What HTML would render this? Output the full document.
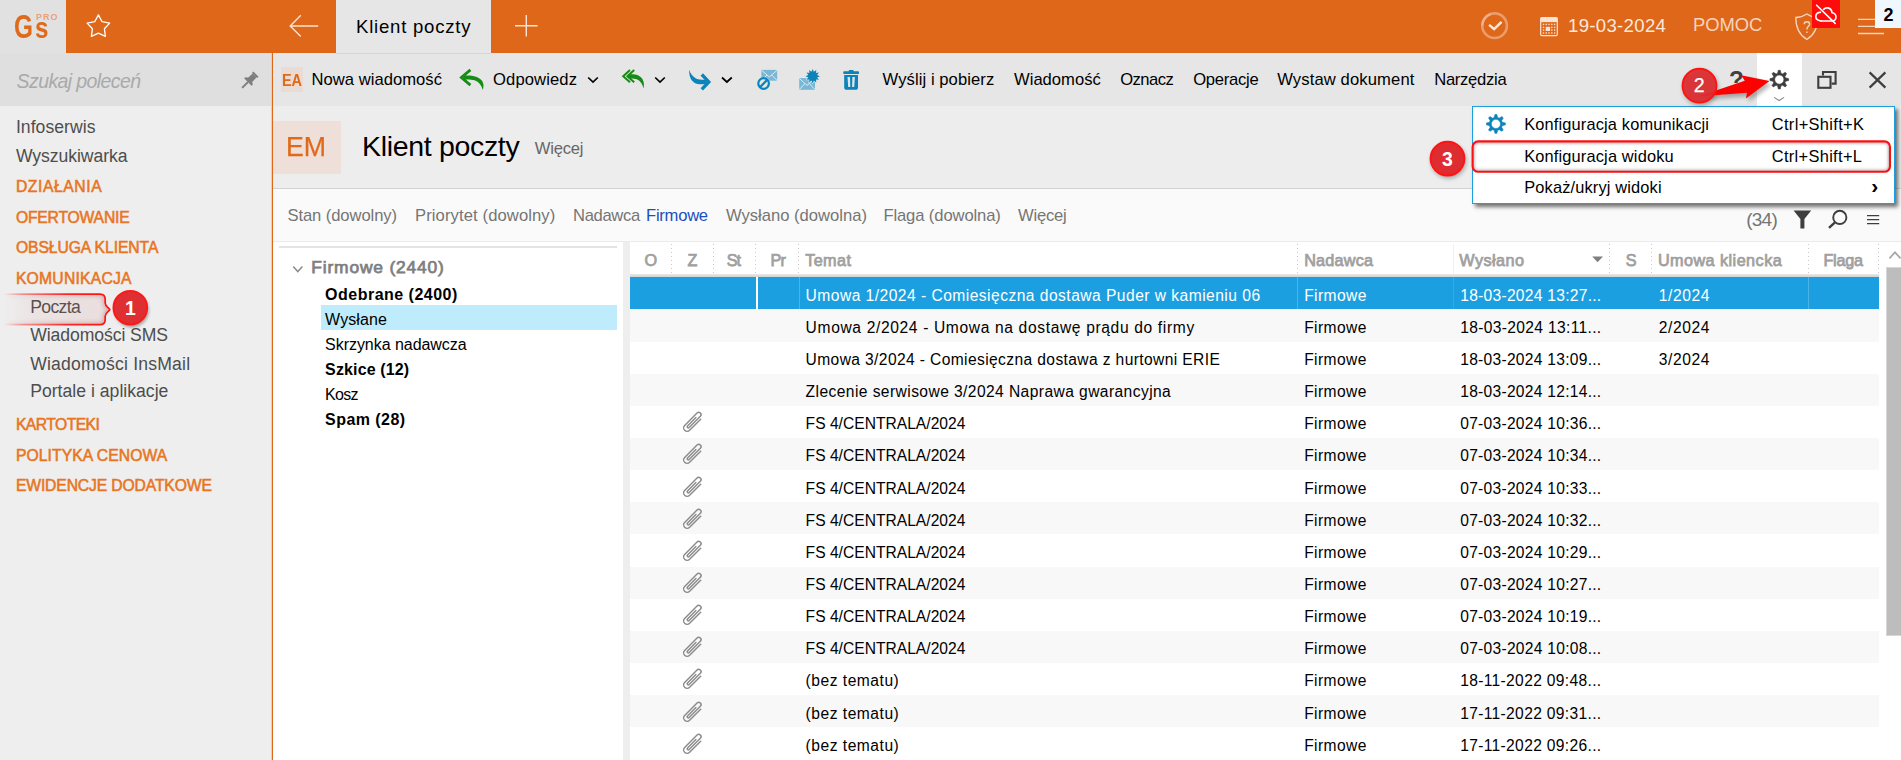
<!DOCTYPE html>
<html lang="pl">
<head>
<meta charset="utf-8">
<title>Klient poczty</title>
<style>
html,body{margin:0;padding:0;}
body{width:1901px;height:760px;overflow:hidden;position:relative;background:#fff;font-family:"Liberation Sans",sans-serif;}
.b{position:absolute;display:block;}
.t{position:absolute;white-space:nowrap;line-height:normal;display:block;}
svg{overflow:visible;}
</style>
</head>
<body>
<!-- ===== backgrounds ===== -->
<div class="b" style="left:0;top:0;width:1901px;height:53px;background:#DE6719"></div>
<div class="b" style="left:0;top:0;width:66px;height:53px;background:#E1E1E1"></div>
<div class="b" style="left:336px;top:0;width:155px;height:53px;background:#E6E6E6"></div>
<!-- sidebar -->
<div class="b" style="left:0;top:53px;width:272px;height:53px;background:#DFDFDF"></div>
<div class="b" style="left:0;top:106px;width:272px;height:654px;background:#EEEEEE"></div>
<div class="b" style="left:272px;top:53px;width:1px;height:707px;background:#DE6719"></div>
<div class="b" style="left:271px;top:53px;width:1px;height:707px;background:#EACDB9"></div>
<!-- main -->
<div class="b" style="left:273px;top:53px;width:1628px;height:53px;background:#E6E6E6"></div>
<div class="b" style="left:336px;top:53px;width:155px;height:1px;background:#DDD3CC"></div>
<div class="b" style="left:1757px;top:53px;width:45px;height:53px;background:#fff"></div>
<div class="b" style="left:273px;top:106px;width:1628px;height:82px;background:#EDEDED"></div>
<div class="b" style="left:273px;top:188px;width:1628px;height:1px;background:#D2D2D2"></div>
<div class="b" style="left:273px;top:189px;width:1628px;height:52px;background:#FAFAFA"></div>
<div class="b" style="left:273px;top:241px;width:1628px;height:1px;background:#EBEBEB"></div>
<div class="b" style="left:273px;top:120.5px;width:68px;height:53px;background:#EEE0D8"></div>
<!-- tree panel -->
<div class="b" style="left:279px;top:246px;width:338px;height:2px;background:#E4E4E4"></div>
<div class="b" style="left:321px;top:305px;width:296px;height:24.5px;background:#BEECFD"></div>
<div class="b" style="left:623px;top:242px;width:7px;height:518px;background:#EEEEEE"></div>
<!-- list -->
<div class="b" style="left:630px;top:274.4px;width:1249px;height:3px;background:linear-gradient(#E9E9E9,#D2D2D2)"></div>
<div class="b" style="left:630px;top:277px;width:1249px;height:32px;background:#1C9FE1"></div>
<div class="b" style="left:630px;top:309px;width:1249px;height:33px;background:#F8F8F8"></div>
<div class="b" style="left:630px;top:374px;width:1249px;height:32px;background:#F8F8F8"></div>
<div class="b" style="left:630px;top:438px;width:1249px;height:32px;background:#F8F8F8"></div>
<div class="b" style="left:630px;top:502px;width:1249px;height:32px;background:#F8F8F8"></div>
<div class="b" style="left:630px;top:567px;width:1249px;height:32px;background:#F8F8F8"></div>
<div class="b" style="left:630px;top:631px;width:1249px;height:32px;background:#F8F8F8"></div>
<div class="b" style="left:630px;top:695px;width:1249px;height:32px;background:#F8F8F8"></div>
<div class="b" style="left:756px;top:277px;width:1.6px;height:32px;background:#fff"></div>
<div class="b" style="left:799px;top:277px;width:1px;height:32px;background:#4CB3E8"></div>
<div class="b" style="left:1297px;top:277px;width:1px;height:32px;background:#4CB3E8"></div>
<div class="b" style="left:1453px;top:277px;width:1px;height:32px;background:#35A9E5"></div>
<div class="b" style="left:1808px;top:277px;width:1px;height:32px;background:#4CB3E8"></div>
<!-- column dividers (dotted) -->
<svg class="b" style="left:0;top:0" width="1901" height="760">
<g stroke="#C9C9C9" stroke-width="1" stroke-dasharray="1 3" fill="none">
<path d="M671.5 244V275M713.5 244V275M755.5 244V275M798.5 244V275M1297.5 244V275M1609.5 244V275M1651.5 244V275M1808.5 244V275M1878.5 244V275"/>
</g>
<path d="M1453.5 244V275" stroke="#F0F0F0" stroke-width="1"/>
<path d="M1592.2 256.5H1603L1597.6 262.2Z" fill="#7F7F7F"/>
<!-- scroll -->
<path d="M1889.5 258.3L1895 252.3L1900.5 258.3" stroke="#A8A8A8" stroke-width="1.8" fill="none"/>
</svg>
<div class="b" style="left:1886px;top:267px;width:16px;height:369px;background:#BDBDBD;border:1px solid #D6D6D6;box-sizing:border-box"></div>
<svg class="b" style="left:680.9px;top:410.3px" width="24" height="24" viewBox="-12 -12 24 24"><g transform="rotate(45)" fill="none" stroke="#8B8B8B" stroke-width="1.45" stroke-linecap="round"><path d="M3.5 -7.4V8.3A3.5 3.5 0 0 1 -3.5 8.3V-9.2A2.35 2.35 0 0 1 1.2 -9.2V6.6A1.15 1.15 0 0 1 -1.1 6.6V-5.2"/></g></svg>
<svg class="b" style="left:680.9px;top:442.4px" width="24" height="24" viewBox="-12 -12 24 24"><g transform="rotate(45)" fill="none" stroke="#8B8B8B" stroke-width="1.45" stroke-linecap="round"><path d="M3.5 -7.4V8.3A3.5 3.5 0 0 1 -3.5 8.3V-9.2A2.35 2.35 0 0 1 1.2 -9.2V6.6A1.15 1.15 0 0 1 -1.1 6.6V-5.2"/></g></svg>
<svg class="b" style="left:680.9px;top:474.6px" width="24" height="24" viewBox="-12 -12 24 24"><g transform="rotate(45)" fill="none" stroke="#8B8B8B" stroke-width="1.45" stroke-linecap="round"><path d="M3.5 -7.4V8.3A3.5 3.5 0 0 1 -3.5 8.3V-9.2A2.35 2.35 0 0 1 1.2 -9.2V6.6A1.15 1.15 0 0 1 -1.1 6.6V-5.2"/></g></svg>
<svg class="b" style="left:680.9px;top:506.7px" width="24" height="24" viewBox="-12 -12 24 24"><g transform="rotate(45)" fill="none" stroke="#8B8B8B" stroke-width="1.45" stroke-linecap="round"><path d="M3.5 -7.4V8.3A3.5 3.5 0 0 1 -3.5 8.3V-9.2A2.35 2.35 0 0 1 1.2 -9.2V6.6A1.15 1.15 0 0 1 -1.1 6.6V-5.2"/></g></svg>
<svg class="b" style="left:680.9px;top:538.9px" width="24" height="24" viewBox="-12 -12 24 24"><g transform="rotate(45)" fill="none" stroke="#8B8B8B" stroke-width="1.45" stroke-linecap="round"><path d="M3.5 -7.4V8.3A3.5 3.5 0 0 1 -3.5 8.3V-9.2A2.35 2.35 0 0 1 1.2 -9.2V6.6A1.15 1.15 0 0 1 -1.1 6.6V-5.2"/></g></svg>
<svg class="b" style="left:680.9px;top:571.0px" width="24" height="24" viewBox="-12 -12 24 24"><g transform="rotate(45)" fill="none" stroke="#8B8B8B" stroke-width="1.45" stroke-linecap="round"><path d="M3.5 -7.4V8.3A3.5 3.5 0 0 1 -3.5 8.3V-9.2A2.35 2.35 0 0 1 1.2 -9.2V6.6A1.15 1.15 0 0 1 -1.1 6.6V-5.2"/></g></svg>
<svg class="b" style="left:680.9px;top:603.1px" width="24" height="24" viewBox="-12 -12 24 24"><g transform="rotate(45)" fill="none" stroke="#8B8B8B" stroke-width="1.45" stroke-linecap="round"><path d="M3.5 -7.4V8.3A3.5 3.5 0 0 1 -3.5 8.3V-9.2A2.35 2.35 0 0 1 1.2 -9.2V6.6A1.15 1.15 0 0 1 -1.1 6.6V-5.2"/></g></svg>
<svg class="b" style="left:680.9px;top:635.3px" width="24" height="24" viewBox="-12 -12 24 24"><g transform="rotate(45)" fill="none" stroke="#8B8B8B" stroke-width="1.45" stroke-linecap="round"><path d="M3.5 -7.4V8.3A3.5 3.5 0 0 1 -3.5 8.3V-9.2A2.35 2.35 0 0 1 1.2 -9.2V6.6A1.15 1.15 0 0 1 -1.1 6.6V-5.2"/></g></svg>
<svg class="b" style="left:680.9px;top:667.4px" width="24" height="24" viewBox="-12 -12 24 24"><g transform="rotate(45)" fill="none" stroke="#8B8B8B" stroke-width="1.45" stroke-linecap="round"><path d="M3.5 -7.4V8.3A3.5 3.5 0 0 1 -3.5 8.3V-9.2A2.35 2.35 0 0 1 1.2 -9.2V6.6A1.15 1.15 0 0 1 -1.1 6.6V-5.2"/></g></svg>
<svg class="b" style="left:680.9px;top:699.6px" width="24" height="24" viewBox="-12 -12 24 24"><g transform="rotate(45)" fill="none" stroke="#8B8B8B" stroke-width="1.45" stroke-linecap="round"><path d="M3.5 -7.4V8.3A3.5 3.5 0 0 1 -3.5 8.3V-9.2A2.35 2.35 0 0 1 1.2 -9.2V6.6A1.15 1.15 0 0 1 -1.1 6.6V-5.2"/></g></svg>
<svg class="b" style="left:680.9px;top:731.7px" width="24" height="24" viewBox="-12 -12 24 24"><g transform="rotate(45)" fill="none" stroke="#8B8B8B" stroke-width="1.45" stroke-linecap="round"><path d="M3.5 -7.4V8.3A3.5 3.5 0 0 1 -3.5 8.3V-9.2A2.35 2.35 0 0 1 1.2 -9.2V6.6A1.15 1.15 0 0 1 -1.1 6.6V-5.2"/></g></svg>

<!-- ===== top bar icons ===== -->
<svg class="b" style="left:0;top:0" width="1901" height="53" fill="none">
<!-- star -->
<path d="M98.4 14.9L102.1 21.7L109.7 23.1L104.4 28.7L105.4 36.4L98.4 33.1L91.4 36.4L92.4 28.7L87.1 23.1L94.7 21.7Z" stroke="#fff" stroke-width="1.3" stroke-linejoin="round"/>
<!-- back arrow -->
<path d="M290.2 26H318.2M300.8 15.3L290.2 26L300.8 36.6" stroke="#FBE3D3" stroke-width="1.4"/>
<!-- plus -->
<path d="M515 25.8H537.6M526.3 15V36.6" stroke="#FBE3D3" stroke-width="1.4"/>
<!-- check circle -->
<circle cx="1494.6" cy="25.7" r="12.3" stroke="#fff" stroke-opacity="0.36" stroke-width="2.6"/>
<path d="M1490.5 14.2A12.3 12.3 0 0 0 1482.3 25.7" stroke="#fff" stroke-opacity="0.22" stroke-width="2.6"/>
<path d="M1489.1 24.8L1494.1 29.2L1501.6 21.8" stroke="#FCE8DC" stroke-width="2.4"/>
<!-- calendar -->
<rect x="1540.7" y="17.6" width="16.6" height="18" rx="1.2" stroke="#FAE3D5" stroke-width="1.2"/>
<rect x="1540.7" y="17.6" width="16.6" height="4.5" fill="#FAE3D5"/>
<g fill="#FAE3D5"><rect x="1545.7" y="26.8" width="4.4" height="4.2"/><rect x="1542.8" y="23.7" width="1.4" height="1.4"/><rect x="1545.6" y="23.7" width="1.4" height="1.4"/><rect x="1548.3" y="23.7" width="1.4" height="1.4"/><rect x="1551.1" y="23.7" width="1.4" height="1.4"/><rect x="1553.9" y="23.7" width="1.4" height="1.4"/><rect x="1542.8" y="26.7" width="1.4" height="1.4"/><rect x="1551.1" y="26.7" width="1.4" height="1.4"/><rect x="1553.9" y="26.7" width="1.4" height="1.4"/><rect x="1542.8" y="29.4" width="1.4" height="1.4"/><rect x="1551.1" y="29.4" width="1.4" height="1.4"/><rect x="1553.9" y="29.4" width="1.4" height="1.4"/><rect x="1542.8" y="32.3" width="1.4" height="1.4"/><rect x="1545.6" y="32.3" width="1.4" height="1.4"/><rect x="1548.3" y="32.3" width="1.4" height="1.4"/><rect x="1551.1" y="32.3" width="1.4" height="1.4"/><rect x="1553.9" y="32.3" width="1.4" height="1.4"/></g>
<!-- shield -->
<path d="M1795.8 17.5C1800 17.5 1803.5 16.2 1806.8 14C1810.1 16.2 1813.6 17.5 1817.8 17.5C1817.8 27 1815 34.5 1806.8 39.4C1798.6 34.5 1795.8 27 1795.8 17.5Z" stroke="#F6D3BD" stroke-width="1.3"/>
<path d="M1804.2 24.2C1804.2 21 1809.6 21 1809.6 24.2C1809.6 26.4 1806.9 26.4 1806.9 29.4M1806.9 31.6V33" stroke="#F6D3BD" stroke-width="1.4"/>
<!-- hamburger -->
<path d="M1858 19.3H1884M1858 26.3H1884M1858 33.5H1884" stroke="#F6D3BD" stroke-width="1.3"/>
</svg>
<div class="b" style="left:1812px;top:0;width:28px;height:28px;background:#FF0B0B"></div>
<svg class="b" style="left:1812px;top:0" width="28" height="28" fill="none" stroke="#fff" stroke-width="1.6" stroke-linecap="round" stroke-linejoin="round">
<path d="M11.6 9.4C12.6 8.3 14 7.7 15.6 7.9C18.2 8.2 19.8 10.2 20 12.8C22.6 13 24.2 14.9 24 17.2C23.8 19.5 22.2 20.9 20 21H9.2"/>
<path d="M9.2 21C6 21 3.6 19.2 3.8 16.2C4 13.6 6 12.2 8.4 12.4"/>
<path d="M4.6 5.2L23.2 23.4"/>
</svg>
<div class="b" style="left:1875px;top:0;width:26px;height:28px;background:#F0F8FF"></div>

<!-- search pin -->
<svg class="b" style="left:237.2px;top:68.7px" width="24" height="24" viewBox="-12 -12 24 24">
<g transform="rotate(45)" fill="#7E7E7E"><rect x="-3.7" y="-9.8" width="7.4" height="1.9" rx="0.5"/><path d="M-2.7 -8H2.7L3.1 -1.2H-3.1Z"/><path d="M-5.4 1.5C-5.4 -0.9 -3.2 -1.9 0 -1.9S5.4 -0.9 5.4 1.5Z"/><rect x="-0.95" y="1.4" width="1.9" height="8.3"/></g>
</svg>

<!-- ===== toolbar icons ===== -->
<div class="b" style="left:281px;top:67px;width:21.5px;height:25px;background:#EADCD5"></div>
<svg class="b" style="left:0;top:53px" width="1901" height="53" viewBox="0 53 1901 53" fill="none">
<!-- reply (green) -->
<path d="M470.4 69.9L461.4 77.5L470.4 85.1" stroke="#168C16" stroke-width="2.8"/>
<path d="M463.6 75.6C472 75 478.6 76.4 482 80.8C484 83.8 483.8 87 482.8 90C481.6 85.4 479 82 474.6 80.3C471.4 79.3 468 79.3 463.6 79.5Z" fill="#168C16"/>
<!-- chevrons -->
<g stroke="#000" stroke-width="1.7">
<path d="M588.2 77.5L593 82L597.8 77.5"/>
<path d="M655.2 77.5L660 82L664.8 77.5"/>
<path d="M722 77.5L726.9 82L731.8 77.5"/>
</g>
<!-- reply all -->
<path d="M630 70.1L623.2 76.2L630 82.3M634.2 70.1L627.4 76.2L634.2 82.3" stroke="#168C16" stroke-width="2"/>
<path d="M628.4 74.4C634 73.8 639.4 74.4 642.4 79C644.2 82 644.2 85.4 643.5 88.4C642.6 84.4 640.6 81 636.8 79.3C634.4 78.4 631.4 78.4 628.4 78.5Z" fill="#168C16"/>
<!-- forward (blue) -->
<path d="M701.8 74.5L708.8 81.9L701.8 89.3" stroke="#0B84BA" stroke-width="3.3"/>
<path d="M689.2 69.8C690.4 73.6 692.6 76.6 696 78.4C699 79.8 702.6 79.8 707 79.7L706 84C702 84.4 697.4 84.6 694 82.4C690.4 80 689 75.4 689.2 69.8Z" fill="#0B84BA"/>
<!-- mail blocked -->
<rect x="761.4" y="69.9" width="15.8" height="10.8" fill="#78B8D6"/>
<path d="M761.6 70.3L769.3 77L777 70.3M761.6 80.4L767 75M777 80.4L771.6 75" stroke="#E4F0F6" stroke-width="0.9"/>
<circle cx="763.6" cy="83.5" r="6.6" fill="#E6E6E6"/>
<circle cx="763.6" cy="83.5" r="5.3" stroke="#0B84BA" stroke-width="2.2"/>
<path d="M759.9 87.2L767.3 79.8" stroke="#0B84BA" stroke-width="2.2"/>
<!-- mail new -->
<rect x="799.2" y="78.1" width="15.8" height="11.7" fill="#78B8D6"/>
<path d="M799.4 78.5L807.1 85.4L814.8 78.5M799.4 89.5L804.8 83.6M814.8 89.5L809.4 83.6" stroke="#E4F0F6" stroke-width="0.9"/>
<path d="M812.7 68.0L814.1 70.8L816.8 69.1L816.7 72.2L819.8 72.1L818.1 74.8L820.9 76.2L818.1 77.6L819.8 80.3L816.7 80.2L816.8 83.3L814.1 81.6L812.7 84.4L811.3 81.6L808.6 83.3L808.7 80.2L805.6 80.3L807.3 77.6L804.5 76.2L807.3 74.8L805.6 72.1L808.7 72.2L808.6 69.1L811.3 70.8Z" fill="#E6E6E6"/>
<path d="M812.7 69.0L813.9 71.8L816.3 70.0L816.0 72.9L818.9 72.6L817.1 75.0L819.9 76.2L817.1 77.4L818.9 79.8L816.0 79.5L816.3 82.4L813.9 80.6L812.7 83.4L811.5 80.6L809.1 82.4L809.4 79.5L806.5 79.8L808.3 77.4L805.5 76.2L808.3 75.0L806.5 72.6L809.4 72.9L809.1 70.0L811.5 71.8Z" fill="#0B84BA"/>
<!-- trash -->
<path d="M848.6 71.3C848.6 70.4 849.2 69.9 850 69.9H852.4C853.2 69.9 853.8 70.4 853.8 71.3H858.2C858.7 71.3 859 71.6 859 72.1V74.1H843.3V72.1C843.3 71.6 843.6 71.3 844.1 71.3Z" fill="#0B84BA"/>
<path d="M844.2 75H858V87.4C858 88.9 857.1 89.8 855.6 89.8H846.6C845.1 89.8 844.2 88.9 844.2 87.4Z" fill="#0B84BA"/>
<path d="M847.5 76.9H850L850.3 86.9H848.2ZM852.4 76.9H854.9L854.2 86.9H852.1Z" fill="#DDE6EA"/>
<!-- gear -->
<path d="M1777.57 73.34L1778.36 70.25L1780.24 70.25L1781.03 73.34L1782.50 73.94L1785.25 72.32L1786.58 73.65L1784.96 76.40L1785.56 77.87L1788.65 78.66L1788.65 80.54L1785.56 81.33L1784.96 82.80L1786.58 85.55L1785.25 86.88L1782.50 85.26L1781.03 85.86L1780.24 88.95L1778.36 88.95L1777.57 85.86L1776.10 85.26L1773.35 86.88L1772.02 85.55L1773.64 82.80L1773.04 81.33L1769.95 80.54L1769.95 78.66L1773.04 77.87L1773.64 76.40L1772.02 73.65L1773.35 72.32L1776.10 73.94Z M1774.70 79.60a4.60 4.60 0 1 0 9.20 0a4.60 4.60 0 1 0 -9.20 0Z" fill="#3E3E3E" fill-rule="evenodd" stroke="#3E3E3E" stroke-width="0.6" stroke-linejoin="round"/>
<path d="M1774.1 97.4L1779.1 100.5L1784.1 97.4" stroke="#8A8A8A" stroke-width="1.1"/>
<!-- restore -->
<path d="M1823 75.6V72H1835.6V83.6H1831.6" stroke="#3E3E3E" stroke-width="2.1"/>
<rect x="1818.3" y="76.8" width="12.2" height="11" stroke="#3E3E3E" stroke-width="2.1"/>
<!-- close -->
<path d="M1869.6 72.4L1885.4 87.6M1885.4 72.4L1869.6 87.6" stroke="#3E3E3E" stroke-width="2.2"/>
</svg>

<!-- filter bar icons -->
<svg class="b" style="left:0;top:189px" width="1901" height="52" viewBox="0 189 1901 52" fill="none">
<path d="M1793.6 210.4H1811.2L1804.4 219V228.4H1800.4V219Z" fill="#3E3E3E"/>
<circle cx="1839.8" cy="217.4" r="6.6" stroke="#3E3E3E" stroke-width="1.9"/>
<path d="M1835 222.4L1829 227.8" stroke="#3E3E3E" stroke-width="2.4"/>
<path d="M1867 215.6H1879.2M1867 219.6H1879.2M1867 223.6H1879.2" stroke="#3E3E3E" stroke-width="1.3"/>
<!-- tree chevron -->
</svg>
<svg class="b" style="left:290px;top:262px" width="16" height="14" fill="none"><path d="M3.2 4.6L7.8 9.6L12.4 4.6" stroke="#8C8C8C" stroke-width="1.5"/></svg>

<!-- ===== popup menu ===== -->
<div class="b" style="left:1472px;top:106px;width:423px;height:97.5px;background:#fff;border:1px solid #1C9FE1;box-sizing:border-box;box-shadow:3px 3px 4px rgba(0,0,0,0.55)"></div>
<svg class="b" style="left:0;top:106px" width="1901" height="40" viewBox="0 106 1901 40" fill="none"><path d="M1494.14 117.54L1494.95 114.45L1496.85 114.45L1497.66 117.54L1499.15 118.16L1501.91 116.55L1503.25 117.89L1501.64 120.65L1502.26 122.14L1505.35 122.95L1505.35 124.85L1502.26 125.66L1501.64 127.15L1503.25 129.91L1501.91 131.25L1499.15 129.64L1497.66 130.26L1496.85 133.35L1494.95 133.35L1494.14 130.26L1492.65 129.64L1489.89 131.25L1488.55 129.91L1490.16 127.15L1489.54 125.66L1486.45 124.85L1486.45 122.95L1489.54 122.14L1490.16 120.65L1488.55 117.89L1489.89 116.55L1492.65 118.16Z M1491.30 123.90a4.60 4.60 0 1 0 9.20 0a4.60 4.60 0 1 0 -9.20 0Z" fill="#0B84BA" fill-rule="evenodd" stroke="#0B84BA" stroke-width="0.6" stroke-linejoin="round"/></svg>

<!-- ===== annotations ===== -->
<!-- poczta callout -->
<svg class="b" style="left:0;top:284px;z-index:5" width="160" height="52" viewBox="0 284 160 52" fill="none">
<defs>
<linearGradient id="gs" gradientUnits="userSpaceOnUse" x1="4" x2="110" y1="0" y2="0"><stop offset="0" stop-color="#FF3030" stop-opacity="0"/><stop offset="0.18" stop-color="#FF3A3A" stop-opacity="0.5"/><stop offset="0.6" stop-color="#FF1C1C" stop-opacity="0.95"/><stop offset="1" stop-color="#FF1010"/></linearGradient>
<linearGradient id="gf" gradientUnits="userSpaceOnUse" x1="4" x2="110" y1="0" y2="0"><stop offset="0" stop-color="#D07070" stop-opacity="0"/><stop offset="0.3" stop-color="#D07070" stop-opacity="0.09"/><stop offset="1" stop-color="#D07070" stop-opacity="0.13"/></linearGradient>
<linearGradient id="gi" gradientUnits="userSpaceOnUse" x1="4" x2="110" y1="0" y2="0"><stop offset="0" stop-color="#A04848" stop-opacity="0"/><stop offset="0.4" stop-color="#A04848" stop-opacity="0.28"/><stop offset="1" stop-color="#A04848" stop-opacity="0.45"/></linearGradient>
<filter id="sh1" x="-40%" y="-40%" width="180%" height="180%"><feGaussianBlur stdDeviation="1.8"/></filter>
<filter id="bl1" x="-10%" y="-40%" width="120%" height="180%"><feGaussianBlur stdDeviation="2.2"/></filter>
<clipPath id="cp1"><path d="M4 294.1H100Q105.2 294.1 105.2 299.3V303C105.2 307 109.8 308 109.8 309.6C109.8 311.2 105.2 312.2 105.2 316.2V319.4Q105.2 324.6 100 324.6H4Z"/></clipPath>
</defs>
<path d="M4 294.1H100Q105.2 294.1 105.2 299.3V303C105.2 307 109.8 308 109.8 309.6C109.8 311.2 105.2 312.2 105.2 316.2V319.4Q105.2 324.6 100 324.6H4Z" fill="url(#gf)"/>
<g clip-path="url(#cp1)"><path d="M4 294.1H100Q105.2 294.1 105.2 299.3V303C105.2 307 109.8 308 109.8 309.6C109.8 311.2 105.2 312.2 105.2 316.2V319.4Q105.2 324.6 100 324.6H4" stroke="url(#gi)" stroke-width="3.5" filter="url(#bl1)"/></g>
<path d="M4 294.1H100Q105.2 294.1 105.2 299.3V303C105.2 307 109.8 308 109.8 309.6C109.8 311.2 105.2 312.2 105.2 316.2V319.4Q105.2 324.6 100 324.6H4" stroke="url(#gs)" stroke-width="1.7"/>
<circle cx="131.6" cy="310.2" r="17.2" fill="#000" opacity="0.32" filter="url(#sh1)"/>
<circle cx="130.3" cy="307.7" r="16.8" fill="#DE3032" stroke="#FF1818" stroke-width="2"/>
</svg>
<!-- circle 2 + arrow -->
<svg class="b" style="left:1670px;top:56px;z-index:5" width="130" height="60" viewBox="1670 56 130 60" fill="none">
<defs><filter id="sh2" x="-40%" y="-40%" width="180%" height="180%"><feGaussianBlur stdDeviation="2.2"/></filter></defs>
<circle cx="1700.6" cy="88.0" r="17.6" fill="#000" opacity="0.30" filter="url(#sh2)"/>
<path d="M1698 96.4L1744.8 80.7L1741.1 75.3L1769.5 81.1L1745.9 98.6L1747 92.8Z" fill="#000" opacity="0.30" filter="url(#sh2)" transform="translate(2.4 3.4)"/>
<path d="M1698 96.4L1744.8 80.7L1741.1 75.3L1769.5 81.1L1745.9 98.6L1747 92.8Z" fill="#FF0000"/>
<circle cx="1699.5" cy="85.7" r="16.9" fill="#DE2C30" fill-opacity="0.93" stroke="#FF1414" stroke-width="2"/>
</svg>
<!-- circle 3 + rect -->
<svg class="b" style="left:1420px;top:130px;z-index:5" width="481" height="60" viewBox="1420 130 481 60" fill="none">
<defs><filter id="sh3" x="-40%" y="-40%" width="180%" height="180%"><feGaussianBlur stdDeviation="2.2"/></filter>
<filter id="sh4" x="-5%" y="-40%" width="110%" height="180%"><feGaussianBlur stdDeviation="1.5"/></filter>
<clipPath id="cp3"><rect x="1472.6" y="141.4" width="417.4" height="30.4" rx="5.5"/></clipPath></defs>
<circle cx="1448.6" cy="160.9" r="17.6" fill="#000" opacity="0.30" filter="url(#sh3)"/>
<circle cx="1447.5" cy="158.6" r="16.9" fill="#DE2C30" stroke="#FF1414" stroke-width="2"/>
<g clip-path="url(#cp3)"><rect x="1472.6" y="141.4" width="417.4" height="30.4" rx="5.5" stroke="#000" stroke-width="4" opacity="0.30" filter="url(#sh4)"/></g>
<rect x="1472.6" y="141.4" width="417.4" height="30.4" rx="5.5" stroke="#FF1010" stroke-width="2.1"/>
</svg>

<!-- ===== texts ===== -->
<span class="t" id="t0" style="left:356.00px;top:15.97px;font-size:18.60px;color:#000;letter-spacing:0.757px;">Klient poczty</span>
<span class="t" id="t1" style="left:1568.00px;top:14.87px;font-size:18.60px;color:#FCE9DC;letter-spacing:0.308px;">19-03-2024</span>
<span class="t" id="t2" style="left:1693.00px;top:14.15px;font-size:18.40px;color:#F6D3BD;letter-spacing:-0.046px;">POMOC</span>
<span class="t" id="t3" style="left:1883.50px;top:4.61px;font-size:18.00px;color:#000;font-weight:700;letter-spacing:0.000px;">2</span>
<span class="t" id="t4" style="left:14.40px;top:7.67px;font-size:33.40px;color:#E0691A;font-weight:700;letter-spacing:0.000px;transform:scaleX(0.730);transform-origin:0 0;">G</span>
<span class="t" id="t5" style="left:34.90px;top:10.57px;font-size:30.20px;color:#E0691A;font-weight:700;letter-spacing:0.000px;transform:scaleX(0.800);transform-origin:0 0;">s</span>
<span class="t" id="t6" style="left:36.10px;top:11.55px;font-size:9.00px;color:#EBA17A;font-weight:700;letter-spacing:0.942px;">PRO</span>
<span class="t" id="t7" style="left:16.60px;top:69.85px;font-size:19.50px;color:#A9A9A9;font-style:italic;letter-spacing:-0.597px;">Szukaj poleceń</span>
<span class="t" id="t8" style="left:15.90px;top:116.77px;font-size:17.60px;color:#4D4D4D;letter-spacing:0.044px;">Infoserwis</span>
<span class="t" id="t9" style="left:15.90px;top:145.97px;font-size:17.60px;color:#4D4D4D;letter-spacing:-0.051px;">Wyszukiwarka</span>
<span class="t" id="t10" style="left:15.90px;top:177.89px;font-size:15.70px;color:#E8751F;letter-spacing:0.590px;-webkit-text-stroke:0.55px #E8751F;">DZIAŁANIA</span>
<span class="t" id="t11" style="left:15.90px;top:208.89px;font-size:15.70px;color:#E8751F;letter-spacing:-0.184px;-webkit-text-stroke:0.55px #E8751F;">OFERTOWANIE</span>
<span class="t" id="t12" style="left:15.90px;top:239.09px;font-size:15.70px;color:#E8751F;letter-spacing:-0.076px;-webkit-text-stroke:0.55px #E8751F;">OBSŁUGA KLIENTA</span>
<span class="t" id="t13" style="left:15.90px;top:270.09px;font-size:15.70px;color:#E8751F;letter-spacing:0.237px;-webkit-text-stroke:0.55px #E8751F;">KOMUNIKACJA</span>
<span class="t" id="t14" style="left:30.20px;top:297.37px;font-size:17.60px;color:#4D4D4D;letter-spacing:-0.639px;">Poczta</span>
<span class="t" id="t15" style="left:30.20px;top:325.37px;font-size:17.60px;color:#4D4D4D;letter-spacing:-0.079px;">Wiadomości SMS</span>
<span class="t" id="t16" style="left:30.20px;top:353.77px;font-size:17.60px;color:#4D4D4D;letter-spacing:0.204px;">Wiadomości InsMail</span>
<span class="t" id="t17" style="left:30.20px;top:381.47px;font-size:17.60px;color:#4D4D4D;letter-spacing:0.017px;">Portale i aplikacje</span>
<span class="t" id="t18" style="left:15.90px;top:415.69px;font-size:15.70px;color:#E8751F;letter-spacing:-0.543px;-webkit-text-stroke:0.55px #E8751F;">KARTOTEKI</span>
<span class="t" id="t19" style="left:15.90px;top:446.69px;font-size:15.70px;color:#E8751F;letter-spacing:0.083px;-webkit-text-stroke:0.55px #E8751F;">POLITYKA CENOWA</span>
<span class="t" id="t20" style="left:15.90px;top:477.39px;font-size:15.70px;color:#E8751F;letter-spacing:-0.135px;-webkit-text-stroke:0.55px #E8751F;">EWIDENCJE DODATKOWE</span>
<span class="t" id="t21" style="left:281.60px;top:72.38px;font-size:15.60px;color:#E0691A;font-weight:700;letter-spacing:-0.300px;transform:scaleX(0.930);transform-origin:0 0;">EA</span>
<span class="t" id="t22" style="left:311.40px;top:69.58px;font-size:16.60px;color:#000;letter-spacing:0.043px;">Nowa wiadomość</span>
<span class="t" id="t23" style="left:493.00px;top:69.58px;font-size:16.60px;color:#000;letter-spacing:0.121px;">Odpowiedz</span>
<span class="t" id="t24" style="left:882.60px;top:69.58px;font-size:16.60px;color:#000;letter-spacing:0.072px;">Wyślij i pobierz</span>
<span class="t" id="t25" style="left:1014.00px;top:69.58px;font-size:16.60px;color:#000;letter-spacing:0.014px;">Wiadomość</span>
<span class="t" id="t26" style="left:1120.20px;top:69.58px;font-size:16.60px;color:#000;letter-spacing:-0.513px;">Oznacz</span>
<span class="t" id="t27" style="left:1193.20px;top:69.58px;font-size:16.60px;color:#000;letter-spacing:-0.263px;">Operacje</span>
<span class="t" id="t28" style="left:1277.20px;top:69.58px;font-size:16.60px;color:#000;letter-spacing:0.127px;">Wystaw dokument</span>
<span class="t" id="t29" style="left:1434.20px;top:69.58px;font-size:16.60px;color:#000;letter-spacing:-0.277px;">Narzędzia</span>
<span class="t" id="t30" style="left:1728.90px;top:66.48px;font-size:24.00px;color:#404040;font-weight:700;letter-spacing:0.000px;">?</span>
<span class="t" id="t31" style="left:286.40px;top:130.20px;font-size:28.40px;color:#E0691A;letter-spacing:0.000px;-webkit-text-stroke:0.25px #E0691A;transform:scaleX(0.940);transform-origin:0 0;">EM</span>
<span class="t" id="t32" style="left:362.00px;top:130.11px;font-size:28.50px;color:#000;letter-spacing:-0.324px;">Klient poczty</span>
<span class="t" id="t33" style="left:534.80px;top:139.38px;font-size:16.60px;color:#666;letter-spacing:-0.219px;">Więcej</span>
<span class="t" id="t34" style="left:287.40px;top:205.68px;font-size:16.60px;color:#757575;letter-spacing:-0.076px;">Stan (dowolny)</span>
<span class="t" id="t35" style="left:415.00px;top:205.68px;font-size:16.60px;color:#757575;letter-spacing:0.110px;">Priorytet (dowolny)</span>
<span class="t" id="t36" style="left:573.00px;top:205.68px;font-size:16.60px;color:#757575;letter-spacing:-0.331px;">Nadawca</span>
<span class="t" id="t37" style="left:646.00px;top:205.68px;font-size:16.60px;color:#1A4FC0;letter-spacing:-0.254px;">Firmowe</span>
<span class="t" id="t38" style="left:725.90px;top:205.68px;font-size:16.60px;color:#757575;letter-spacing:0.008px;">Wysłano (dowolna)</span>
<span class="t" id="t39" style="left:883.40px;top:205.68px;font-size:16.60px;color:#757575;letter-spacing:-0.106px;">Flaga (dowolna)</span>
<span class="t" id="t40" style="left:1018.00px;top:205.68px;font-size:16.60px;color:#757575;letter-spacing:-0.219px;">Więcej</span>
<span class="t" id="t41" style="left:1746.20px;top:209.11px;font-size:19.00px;color:#757575;letter-spacing:-0.732px;">(34)</span>
<span class="t" id="t42" style="left:311.30px;top:257.15px;font-size:17.40px;color:#7E7E7E;letter-spacing:0.832px;-webkit-text-stroke:0.75px #7E7E7E;">Firmowe (2440)</span>
<span class="t" id="t43" style="left:325.10px;top:285.72px;font-size:16.00px;color:#000;font-weight:700;letter-spacing:0.486px;">Odebrane (2400)</span>
<span class="t" id="t44" style="left:325.10px;top:311.02px;font-size:16.00px;color:#000;letter-spacing:0.080px;">Wysłane</span>
<span class="t" id="t45" style="left:325.10px;top:335.92px;font-size:16.00px;color:#000;letter-spacing:-0.044px;">Skrzynka nadawcza</span>
<span class="t" id="t46" style="left:325.10px;top:361.12px;font-size:16.00px;color:#000;font-weight:700;letter-spacing:0.138px;">Szkice (12)</span>
<span class="t" id="t47" style="left:325.10px;top:386.22px;font-size:16.00px;color:#000;letter-spacing:-0.693px;">Kosz</span>
<span class="t" id="t48" style="left:325.10px;top:411.42px;font-size:16.00px;color:#000;font-weight:700;letter-spacing:0.441px;">Spam (28)</span>
<span class="t" id="t49" style="left:644.60px;top:250.84px;font-size:16.20px;color:#A0A0A0;letter-spacing:0.000px;-webkit-text-stroke:0.75px #A0A0A0;">O</span>
<span class="t" id="t50" style="left:687.60px;top:250.84px;font-size:16.20px;color:#A0A0A0;letter-spacing:0.000px;-webkit-text-stroke:0.75px #A0A0A0;">Z</span>
<span class="t" id="t51" style="left:726.70px;top:250.84px;font-size:16.20px;color:#A0A0A0;letter-spacing:-0.897px;-webkit-text-stroke:0.75px #A0A0A0;">St</span>
<span class="t" id="t52" style="left:770.50px;top:250.84px;font-size:16.20px;color:#A0A0A0;letter-spacing:-0.887px;-webkit-text-stroke:0.75px #A0A0A0;">Pr</span>
<span class="t" id="t53" style="left:805.20px;top:250.84px;font-size:16.20px;color:#A0A0A0;letter-spacing:0.402px;-webkit-text-stroke:0.75px #A0A0A0;">Temat</span>
<span class="t" id="t54" style="left:1304.20px;top:250.84px;font-size:16.20px;color:#A0A0A0;letter-spacing:0.217px;-webkit-text-stroke:0.75px #A0A0A0;">Nadawca</span>
<span class="t" id="t55" style="left:1459.30px;top:250.84px;font-size:16.20px;color:#A0A0A0;letter-spacing:0.477px;-webkit-text-stroke:0.75px #A0A0A0;">Wysłano</span>
<span class="t" id="t56" style="left:1625.70px;top:250.84px;font-size:16.20px;color:#A0A0A0;letter-spacing:0.000px;-webkit-text-stroke:0.75px #A0A0A0;">S</span>
<span class="t" id="t57" style="left:1657.90px;top:250.84px;font-size:16.20px;color:#A0A0A0;letter-spacing:0.457px;-webkit-text-stroke:0.75px #A0A0A0;">Umowa kliencka</span>
<span class="t" id="t58" style="left:1823.40px;top:250.84px;font-size:16.20px;color:#A0A0A0;letter-spacing:-0.225px;-webkit-text-stroke:0.75px #A0A0A0;">Flaga</span>
<span class="t" id="t59" style="left:805.60px;top:286.78px;font-size:15.60px;color:#fff;letter-spacing:0.471px;">Umowa 1/2024 - Comiesięczna dostawa Puder w kamieniu 06</span>
<span class="t" id="t60" style="left:1304.20px;top:286.78px;font-size:15.60px;color:#fff;letter-spacing:0.403px;">Firmowe</span>
<span class="t" id="t61" style="left:1460.20px;top:286.78px;font-size:15.60px;color:#fff;letter-spacing:0.271px;">18-03-2024 13:27...</span>
<span class="t" id="t62" style="left:1658.70px;top:286.78px;font-size:15.60px;color:#fff;letter-spacing:0.599px;">1/2024</span>
<span class="t" id="t63" style="left:805.60px;top:318.92px;font-size:15.60px;color:#000;letter-spacing:0.642px;">Umowa 2/2024 - Umowa na dostawę prądu do firmy</span>
<span class="t" id="t64" style="left:1304.20px;top:318.92px;font-size:15.60px;color:#000;letter-spacing:0.403px;">Firmowe</span>
<span class="t" id="t65" style="left:1460.20px;top:318.92px;font-size:15.60px;color:#000;letter-spacing:0.335px;">18-03-2024 13:11...</span>
<span class="t" id="t66" style="left:1658.70px;top:318.92px;font-size:15.60px;color:#000;letter-spacing:0.599px;">2/2024</span>
<span class="t" id="t67" style="left:805.60px;top:351.06px;font-size:15.60px;color:#000;letter-spacing:0.381px;">Umowa 3/2024 - Comiesięczna dostawa z hurtowni ERIE</span>
<span class="t" id="t68" style="left:1304.20px;top:351.06px;font-size:15.60px;color:#000;letter-spacing:0.403px;">Firmowe</span>
<span class="t" id="t69" style="left:1460.20px;top:351.06px;font-size:15.60px;color:#000;letter-spacing:0.271px;">18-03-2024 13:09...</span>
<span class="t" id="t70" style="left:1658.70px;top:351.06px;font-size:15.60px;color:#000;letter-spacing:0.599px;">3/2024</span>
<span class="t" id="t71" style="left:805.60px;top:383.20px;font-size:15.60px;color:#000;letter-spacing:0.420px;">Zlecenie serwisowe 3/2024 Naprawa gwarancyjna</span>
<span class="t" id="t72" style="left:1304.20px;top:383.20px;font-size:15.60px;color:#000;letter-spacing:0.403px;">Firmowe</span>
<span class="t" id="t73" style="left:1460.20px;top:383.20px;font-size:15.60px;color:#000;letter-spacing:0.271px;">18-03-2024 12:14...</span>
<span class="t" id="t74" style="left:805.60px;top:415.34px;font-size:15.60px;color:#000;letter-spacing:0.019px;">FS 4/CENTRALA/2024</span>
<span class="t" id="t75" style="left:1304.20px;top:415.34px;font-size:15.60px;color:#000;letter-spacing:0.403px;">Firmowe</span>
<span class="t" id="t76" style="left:1460.20px;top:415.34px;font-size:15.60px;color:#000;letter-spacing:0.271px;">07-03-2024 10:36...</span>
<span class="t" id="t77" style="left:805.60px;top:447.48px;font-size:15.60px;color:#000;letter-spacing:0.019px;">FS 4/CENTRALA/2024</span>
<span class="t" id="t78" style="left:1304.20px;top:447.48px;font-size:15.60px;color:#000;letter-spacing:0.403px;">Firmowe</span>
<span class="t" id="t79" style="left:1460.20px;top:447.48px;font-size:15.60px;color:#000;letter-spacing:0.271px;">07-03-2024 10:34...</span>
<span class="t" id="t80" style="left:805.60px;top:479.62px;font-size:15.60px;color:#000;letter-spacing:0.019px;">FS 4/CENTRALA/2024</span>
<span class="t" id="t81" style="left:1304.20px;top:479.62px;font-size:15.60px;color:#000;letter-spacing:0.403px;">Firmowe</span>
<span class="t" id="t82" style="left:1460.20px;top:479.62px;font-size:15.60px;color:#000;letter-spacing:0.271px;">07-03-2024 10:33...</span>
<span class="t" id="t83" style="left:805.60px;top:511.76px;font-size:15.60px;color:#000;letter-spacing:0.019px;">FS 4/CENTRALA/2024</span>
<span class="t" id="t84" style="left:1304.20px;top:511.76px;font-size:15.60px;color:#000;letter-spacing:0.403px;">Firmowe</span>
<span class="t" id="t85" style="left:1460.20px;top:511.76px;font-size:15.60px;color:#000;letter-spacing:0.271px;">07-03-2024 10:32...</span>
<span class="t" id="t86" style="left:805.60px;top:543.90px;font-size:15.60px;color:#000;letter-spacing:0.019px;">FS 4/CENTRALA/2024</span>
<span class="t" id="t87" style="left:1304.20px;top:543.90px;font-size:15.60px;color:#000;letter-spacing:0.403px;">Firmowe</span>
<span class="t" id="t88" style="left:1460.20px;top:543.90px;font-size:15.60px;color:#000;letter-spacing:0.271px;">07-03-2024 10:29...</span>
<span class="t" id="t89" style="left:805.60px;top:576.04px;font-size:15.60px;color:#000;letter-spacing:0.019px;">FS 4/CENTRALA/2024</span>
<span class="t" id="t90" style="left:1304.20px;top:576.04px;font-size:15.60px;color:#000;letter-spacing:0.403px;">Firmowe</span>
<span class="t" id="t91" style="left:1460.20px;top:576.04px;font-size:15.60px;color:#000;letter-spacing:0.271px;">07-03-2024 10:27...</span>
<span class="t" id="t92" style="left:805.60px;top:608.18px;font-size:15.60px;color:#000;letter-spacing:0.019px;">FS 4/CENTRALA/2024</span>
<span class="t" id="t93" style="left:1304.20px;top:608.18px;font-size:15.60px;color:#000;letter-spacing:0.403px;">Firmowe</span>
<span class="t" id="t94" style="left:1460.20px;top:608.18px;font-size:15.60px;color:#000;letter-spacing:0.271px;">07-03-2024 10:19...</span>
<span class="t" id="t95" style="left:805.60px;top:640.32px;font-size:15.60px;color:#000;letter-spacing:0.019px;">FS 4/CENTRALA/2024</span>
<span class="t" id="t96" style="left:1304.20px;top:640.32px;font-size:15.60px;color:#000;letter-spacing:0.403px;">Firmowe</span>
<span class="t" id="t97" style="left:1460.20px;top:640.32px;font-size:15.60px;color:#000;letter-spacing:0.271px;">07-03-2024 10:08...</span>
<span class="t" id="t98" style="left:805.60px;top:672.46px;font-size:15.60px;color:#000;letter-spacing:0.514px;">(bez tematu)</span>
<span class="t" id="t99" style="left:1304.20px;top:672.46px;font-size:15.60px;color:#000;letter-spacing:0.403px;">Firmowe</span>
<span class="t" id="t100" style="left:1460.20px;top:672.46px;font-size:15.60px;color:#000;letter-spacing:0.335px;">18-11-2022 09:48...</span>
<span class="t" id="t101" style="left:805.60px;top:704.60px;font-size:15.60px;color:#000;letter-spacing:0.514px;">(bez tematu)</span>
<span class="t" id="t102" style="left:1304.20px;top:704.60px;font-size:15.60px;color:#000;letter-spacing:0.403px;">Firmowe</span>
<span class="t" id="t103" style="left:1460.20px;top:704.60px;font-size:15.60px;color:#000;letter-spacing:0.335px;">17-11-2022 09:31...</span>
<span class="t" id="t104" style="left:805.60px;top:736.74px;font-size:15.60px;color:#000;letter-spacing:0.514px;">(bez tematu)</span>
<span class="t" id="t105" style="left:1304.20px;top:736.74px;font-size:15.60px;color:#000;letter-spacing:0.403px;">Firmowe</span>
<span class="t" id="t106" style="left:1460.20px;top:736.74px;font-size:15.60px;color:#000;letter-spacing:0.335px;">17-11-2022 09:26...</span>
<span class="t" id="t107" style="left:1524.20px;top:115.46px;font-size:16.40px;color:#000;letter-spacing:0.152px;">Konfiguracja komunikacji</span>
<span class="t" id="t108" style="left:1771.80px;top:115.46px;font-size:16.40px;color:#000;letter-spacing:0.339px;">Ctrl+Shift+K</span>
<span class="t" id="t109" style="left:1524.20px;top:146.76px;font-size:16.40px;color:#000;letter-spacing:0.155px;">Konfiguracja widoku</span>
<span class="t" id="t110" style="left:1771.80px;top:146.76px;font-size:16.40px;color:#000;letter-spacing:0.322px;">Ctrl+Shift+L</span>
<span class="t" id="t111" style="left:1524.20px;top:177.96px;font-size:16.40px;color:#000;letter-spacing:0.151px;">Pokaż/ukryj widoki</span>
<span class="t" id="t112" style="left:1871.20px;top:173.59px;font-size:21.00px;color:#000;font-weight:700;letter-spacing:0.000px;">›</span>
<span class="t" id="t113" style="left:124.90px;top:297.04px;font-size:19.40px;color:#fff;font-weight:700;letter-spacing:0.000px;z-index:6;">1</span>
<span class="t" id="t114" style="left:1693.70px;top:74.36px;font-size:19.60px;color:#fff;letter-spacing:0.000px;-webkit-text-stroke:0.25px #fff;z-index:6;">2</span>
<span class="t" id="t115" style="left:1442.10px;top:147.74px;font-size:19.40px;color:#fff;font-weight:700;letter-spacing:0.000px;z-index:6;">3</span>
</body>
</html>
